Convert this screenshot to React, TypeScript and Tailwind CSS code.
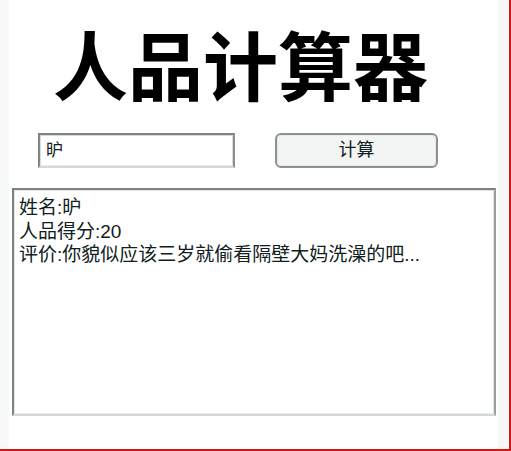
import React from "react";

export default function App() {
  const cjk = { fontFamily: '"Liberation Sans", "Noto Sans CJK SC", sans-serif' };
  return (
    <div className="w-[511px] h-[451px] bg-[#f7f8f8] border-r-2 border-b-2 border-[#d01818] overflow-hidden" style={cjk}>
      <div className="ml-[9px] w-[489px] h-[449px] bg-white flex flex-col">
        <h1 className="pt-[25px] pl-[44px] h-[120px] text-[75px] leading-[88px] font-bold text-black">人品计算器</h1>
        <div className="flex items-center mt-[13px] h-[35px]">
          <div className="ml-[29px] w-[197px] h-[35px] border-2 border-t-[#7f8585] border-l-[#7f8585] border-r-[#8a9090] border-b-[#d5d9d9] bg-white flex items-center">
            <div className="w-full h-full border border-t-[#d8dcdc] border-l-[#d8dcdc] border-r-[#d8dcdc] border-b-[#e8ebeb] pl-[5px] flex items-center text-[17px] text-[#112222]">昈</div>
          </div>
          <div className="ml-[40px] w-[163px] h-[35px] rounded-[6px] border-2 border-[#8c9292] bg-[#f3f4f4] flex items-center justify-center">
            <div className="w-full h-full rounded-[5px] border border-[#e6e9e9] flex items-center justify-center text-[18px] text-[#112222]">计算</div>
          </div>
        </div>
        <div className="ml-[3px] mt-[20px] w-[484px] h-[228px] border-2 border-t-[#7c8282] border-l-[#7c8282] border-r-[#9aa0a0] border-b-[#d3d7d7] bg-white">
          <div className="w-full h-full border border-t-[#e2e5e5] border-l-[#e2e5e5] border-r-[#e2e5e5] border-b-[#eceeee] pl-[4px] pt-[5px] text-[19px] leading-[23.5px] text-[#102020]">
            <div>姓名:昈</div>
            <div>人品得分:20</div>
            <div>评价:你貌似应该三岁就偷看隔壁大妈洗澡的吧...</div>
          </div>
        </div>
      </div>
    </div>
  );
}
